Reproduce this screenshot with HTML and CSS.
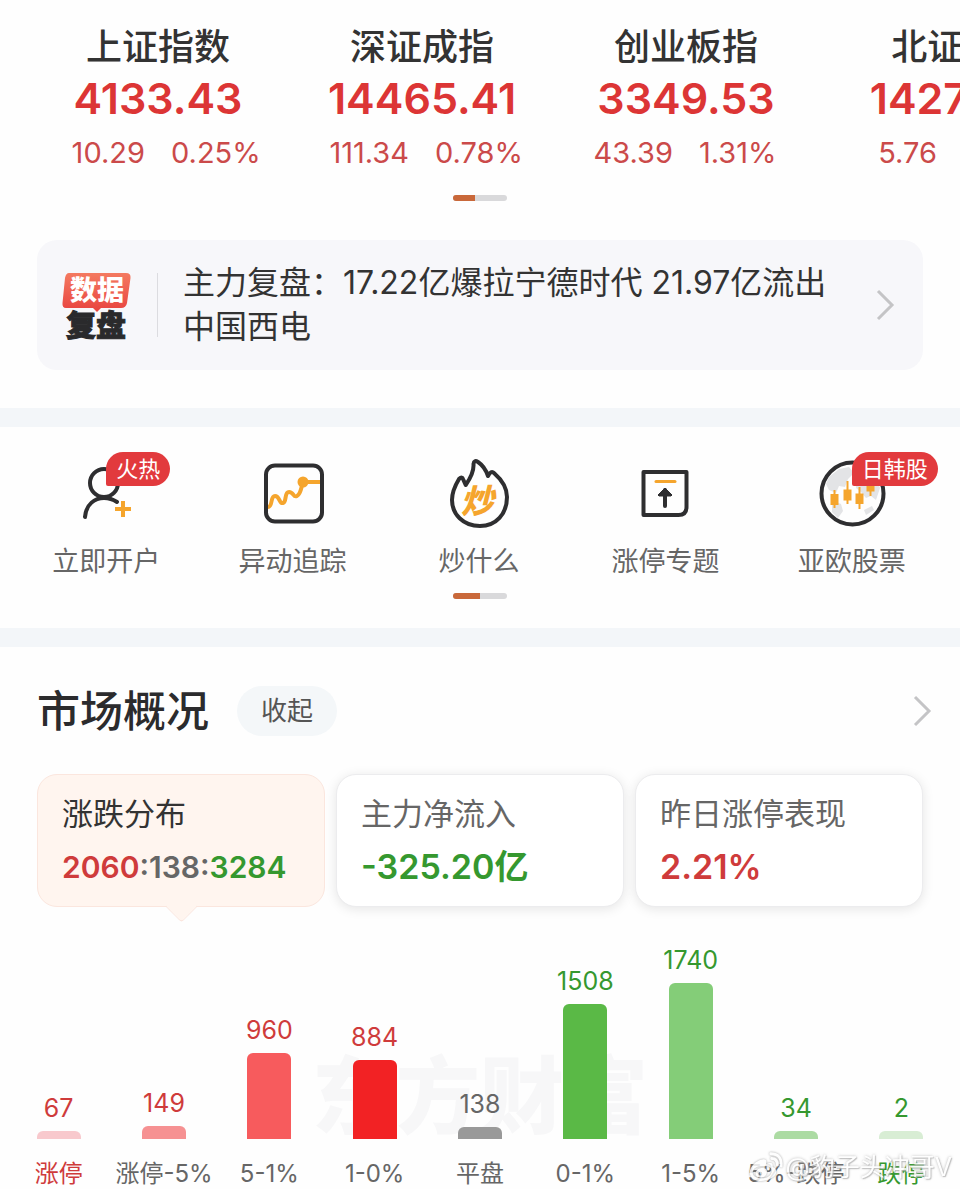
FILE: index.html
```html
<!DOCTYPE html>
<html lang="zh-CN">
<head>
    <meta charset="UTF-8">
    <meta name="viewport" content="width=device-width, initial-scale=1.0">
    <title>市场概况</title>
    <link rel="stylesheet" href="styles.css">
</head>
<body>
    <section class="indices">
        <div class="index-list">
            <a class="index" href="#sh">
                <span class="index-name">上证指数</span>
                <span class="index-value">4133.43</span>
                <span class="index-change"><span>10.29</span><span>0.25%</span></span>
            </a>
            <a class="index" href="#sz">
                <span class="index-name">深证成指</span>
                <span class="index-value">14465.41</span>
                <span class="index-change"><span>111.34</span><span>0.78%</span></span>
            </a>
            <a class="index" href="#cyb">
                <span class="index-name">创业板指</span>
                <span class="index-value">3349.53</span>
                <span class="index-change"><span>43.39</span><span>1.31%</span></span>
            </a>
            <a class="index" href="#bz">
                <span class="index-name">北证50</span>
                <span class="index-value">1427.39</span>
                <span class="index-change"><span>5.76</span></span>
            </a>
        </div>
        <div class="pager"><span class="pager-on"></span></div>
        <a class="news" href="#review">
            <svg class="news-logo" width="72" height="70" viewBox="0 0 72 70">
                <defs>
                    <linearGradient id="badge" x1="0" y1="0" x2="0" y2="1">
                        <stop offset="0" stop-color="#f47a60"/>
                        <stop offset="1" stop-color="#e8433f"/>
                    </linearGradient>
                </defs>
                <path d="M8 3H65Q70 3 69.500 8L66 33Q65 38 60 38H40L36 42L32 38H5Q1 38 1.500 33L4 8Q5 3 8 3Z" fill="url(#badge)"/>
                <text class="logo-top" x="36" y="30" text-anchor="middle">数据</text>
                <text class="logo-bottom" x="35" y="66" text-anchor="middle">复盘</text>
            </svg>
            <span class="news-text">主力复盘：17.22亿爆拉宁德时代 21.97亿流出中国西电</span>
            <svg class="chevron" width="20" height="32" viewBox="0 0 20 32"><path d="M3 2L17 16L3 30"/></svg>
        </a>
    </section>

    <nav class="shortcuts">
        <div class="shortcut-list">
            <a class="shortcut" href="#open">
                <svg width="80" height="80" viewBox="0 0 80 80">
                    <g fill="none" stroke="#2e2e30" stroke-width="4" stroke-linecap="round">
                        <circle cx="38" cy="33" r="14"/>
                        <path d="M19 67C20 54 29 48 38 48C44 48 48 50 51 52"/>
                    </g>
                    <path d="M49 59H65M57 51V67" stroke="#f5a52d" stroke-width="4"/>
                </svg>
                <span class="tag">火热</span>
                <span class="shortcut-name">立即开户</span>
            </a>
            <a class="shortcut" href="#track">
                <svg width="80" height="80" viewBox="0 0 80 80">
                    <path d="M15 57C20 57 17 46 22 46S26 54 30 53S31 42 36 42S40 48 44 46S48 38 50 32H68" fill="none" stroke="#f5a52d" stroke-width="4"/>
                    <circle cx="50" cy="32" r="5.500" fill="#f5a52d"/>
                    <rect x="13" y="15.500" width="56" height="56" rx="9" fill="none" stroke="#2e2e30" stroke-width="4"/>
                </svg>
                <span class="shortcut-name">异动追踪</span>
            </a>
            <a class="shortcut" href="#hot">
                <svg width="80" height="80" viewBox="0 0 80 80">
                    <path d="M26.700 35C31 29 35 21 34.500 14Q35 9.500 39 12C45 16 47 20 49 26Q52 20 55 23C63 30 68 39 68 47C68 64 57 76 41 76C24 76 13 64 13 50C13 41 17 34 20 29Q23 26 24 29Z" fill="none" stroke="#2e2e30" stroke-width="4" stroke-linejoin="round"/>
                    <text class="flame-text" x="38" y="63" text-anchor="middle">炒</text>
                </svg>
                <span class="shortcut-name">炒什么</span>
            </a>
            <a class="shortcut" href="#limit">
                <svg width="80" height="80" viewBox="0 0 80 80">
                    <path d="M18.500 22H61.500V57Q61.500 65 53.500 65H18.500Z" fill="none" stroke="#2e2e30" stroke-width="4" stroke-linejoin="round"/>
                    <path d="M31 31.500H50" stroke="#f5a52d" stroke-width="3" stroke-linecap="round"/>
                    <path d="M40 40V56" stroke="#2e2e30" stroke-width="4" stroke-linecap="round"/>
                    <path d="M40 38L47 45L46 46H34L33 45Z" fill="#2e2e30" stroke="#2e2e30" stroke-linejoin="round"/>
                </svg>
                <span class="shortcut-name">涨停专题</span>
            </a>
            <a class="shortcut" href="#global">
                <svg width="80" height="80" viewBox="0 0 80 80">
                    <path d="M17 27L27 19L37 17L42 23L36 29L33 37L27 36L24 43L17 40L14 34ZM20 50L29 54L31 61L26 68L20 62ZM43 27L52 20L62 25L68 38L64 50L59 46L54 48L49 42L44 38ZM52 60L60 56L62 60L54 65Z" fill="#e3e4e6"/>
                    <g fill="#f5a52d" stroke="#f5a52d">
                        <path d="M22.500 40V58M35.500 31V54M47.500 37V59M58.500 28V46" stroke-width="2"/>
                        <path d="M18.500 44H26.500V55H18.500ZM31.500 39.500H39.500V50.500H31.500ZM43.500 43.500H51.500V54H43.500ZM54.500 31H62.500V41.500H54.500Z" stroke="none"/>
                    </g>
                    <circle cx="40.500" cy="43.500" r="31" fill="none" stroke="#2e2e30" stroke-width="4"/>
                </svg>
                <span class="tag">日韩股</span>
                <span class="shortcut-name">亚欧股票</span>
            </a>
        </div>
        <div class="pager"><span class="pager-on half"></span></div>
    </nav>

    <section class="market">
        <header class="market-head">
            <h2>市场概况</h2>
            <button class="fold" type="button">收起</button>
            <a class="more" href="#market" aria-label="市场概况">
                <svg class="chevron" width="20" height="32" viewBox="0 0 20 32"><path d="M3 2L17 16L3 30"/></svg>
            </a>
        </header>
        <div class="cards">
            <button class="card active" type="button">
                <span class="card-name">涨跌分布</span>
                <span class="card-ratio"><span class="red">2060</span>:138:<span class="green">3284</span></span>
            </button>
            <button class="card" type="button">
                <span class="card-name">主力净流入</span>
                <span class="card-value green">-325.20亿</span>
            </button>
            <button class="card" type="button">
                <span class="card-name">昨日涨停表现</span>
                <span class="card-value red">2.21%</span>
            </button>
        </div>
        <div class="chart">
            <span class="chart-mark">东方财富</span>
            <div class="col red"><span class="num">67</span><span class="bar up-1" style="height: 8px"></span><span class="range">涨停</span></div>
            <div class="col red"><span class="num">149</span><span class="bar up-2" style="height: 13px"></span><span class="range gray">涨停-5%</span></div>
            <div class="col red"><span class="num">960</span><span class="bar up-3" style="height: 86px"></span><span class="range gray">5-1%</span></div>
            <div class="col red"><span class="num">884</span><span class="bar up-4" style="height: 79px"></span><span class="range gray">1-0%</span></div>
            <div class="col gray"><span class="num">138</span><span class="bar flat" style="height: 12px"></span><span class="range">平盘</span></div>
            <div class="col green"><span class="num">1508</span><span class="bar down-4" style="height: 135px"></span><span class="range gray">0-1%</span></div>
            <div class="col green"><span class="num">1740</span><span class="bar down-3" style="height: 156px"></span><span class="range gray">1-5%</span></div>
            <div class="col green"><span class="num">34</span><span class="bar down-2" style="height: 8px"></span><span class="range gray">5%-跌停</span></div>
            <div class="col green"><span class="num">2</span><span class="bar down-1" style="height: 8px"></span><span class="range">跌停</span></div>
        </div>
        <div class="author">
            <svg width="36" height="34" viewBox="0 0 38 34">
                <path d="M15 9C8 10 1 18 2 24C3 31 12 33 19 31C27 29 32 24 29 19C28 17 26 18 26 16C27 12 23 12 19 14C20 10 19 8 15 9ZM15 16C9 16 5 19 5 23S10 29 15 29S25 26 25 21S20 16 15 16Z" fill="#fff" fill-rule="evenodd"/>
                <path d="M14 18C11 18 8 21 8 24S11 28 14 28S20 26 20 22S17 18 14 18ZM13 22A2 2 0 1 1 13 26A2 2 0 1 1 13 22Z" fill="#fff" fill-rule="evenodd"/>
                <path d="M25 8Q31 8 31 15M24 3Q36 3 35 16" fill="none" stroke="#fff" stroke-width="3" stroke-linecap="round"/>
            </svg>
            <span>@豹子头冲哥V</span>
        </div>
    </section>
</body>
</html>
```
FILE: styles.css
```css
* {
    box-sizing: border-box;
}
body {
    margin: 0;
    font-family: Inter, "Noto Sans CJK SC", sans-serif;
    color: #333;
    background-color: #fefefe;
    overflow-x: hidden;
}
a {
    color: inherit;
    text-decoration: none;
}
button {
    font-family: inherit;
    border: none;
    cursor: pointer;
}
.red {
    color: #cf3b3b;
}
.green {
    color: #35982f;
}
.gray {
    color: #666;
}
.chevron {
    flex: none;
    fill: none;
    stroke: #c4c4c6;
    stroke-width: 3;
}
.pager {
    width: 54px;
    height: 6px;
    margin: 0 auto;
    border-radius: 3px;
    background-color: #d9d9db;
    overflow: hidden;
}
.pager-on {
    display: block;
    width: 22px;
    height: 6px;
    background-color: #c9683a;
}
.pager-on.half {
    width: 27px;
}

/* indices */
.indices {
    padding: 24px 0 38px;
}
.index-list {
    display: flex;
    padding-left: 26px;
    margin-bottom: 20px;
    overflow: hidden;
}
.index {
    flex: 0 0 264px;
    display: flex;
    flex-direction: column;
    align-items: center;
    white-space: nowrap;
}
.index-name {
    font-size: 36px;
    line-height: 46px;
    font-weight: 500;
}
.index-value {
    font-size: 43px;
    line-height: 56px;
    font-weight: 600;
    color: #dc3535;
}
.index-change {
    display: grid;
    grid-template-columns: 1fr 1fr;
    gap: 26px;
    width: 100%;
    margin-top: 5px;
    font-size: 29px;
    line-height: 44px;
    color: #cb4a4a;
}
.index-change span:first-child {
    text-align: right;
}
.news {
    display: flex;
    align-items: center;
    margin: 39px 37px 0;
    padding: 21px 28px 21px 24px;
    border-radius: 20px;
    background-color: #f7f7fa;
}
.news-logo {
    flex: none;
}
.news-text {
    flex: 1;
    margin-left: 24px;
    padding: 0 32px 0 26px;
    font-size: 32px;
    line-height: 44px;
    background: linear-gradient(#dcdce0, #dcdce0) left center / 1px 64px no-repeat;
}
.logo-top {
    font-size: 27px;
    font-weight: 900;
    fill: #fff;
}
.logo-bottom {
    font-size: 30px;
    font-weight: 900;
    fill: #2a2a2c;
    stroke: #2a2a2c;
}

/* shortcuts */
.shortcuts {
    padding: 23px 0 29px;
    border-top: 19px solid #f3f6f9;
    border-bottom: 19px solid #f3f6f9;
}
.shortcut-list {
    display: grid;
    grid-template-columns: repeat(5, 1fr);
    padding: 0 15px 0 13px;
    margin-bottom: 11px;
}
.shortcut {
    position: relative;
    display: flex;
    flex-direction: column;
    align-items: center;
}
.shortcut-name {
    margin-top: 12px;
    font-size: 27px;
    line-height: 40px;
    color: #666;
}
.tag {
    position: absolute;
    top: 2px;
    left: 50%;
    padding: 0 10px;
    border-radius: 17px 17px 17px 2px;
    font-size: 22px;
    line-height: 34px;
    color: #fff;
    background-color: #e23a3d;
}
.flame-text {
    font-size: 33px;
    font-weight: 900;
    font-style: italic;
    fill: #f5a52d;
}

/* market */
.market {
    position: relative;
    padding: 38px 0 0;
}
.market-head {
    display: flex;
    align-items: center;
    padding: 0 28px 0 37px;
    margin-bottom: 37px;
}
h2 {
    margin: 0;
    font-size: 43px;
    line-height: 52px;
    font-weight: 500;
    color: #2b2b2d;
}
.fold {
    margin-left: 28px;
    padding: 0 24px;
    border-radius: 25px;
    font-size: 26px;
    line-height: 50px;
    color: #555;
    background-color: #f4f7f9;
}
.more {
    margin-left: auto;
    line-height: 0;
}
.cards {
    display: grid;
    grid-template-columns: repeat(3, 1fr);
    gap: 11px;
    padding: 0 37px;
}
.card {
    position: relative;
    display: flex;
    flex-direction: column;
    gap: 9px;
    padding: 17px 24px;
    border: 1px solid #ececee;
    border-radius: 20px;
    text-align: left;
    background-color: #fff;
    box-shadow: 0 2px 12px rgba(0, 0, 0, 0.1);
}
.card-name {
    font-size: 31px;
    line-height: 44px;
    color: #666;
}
.card-value {
    font-size: 34px;
    line-height: 44px;
    font-weight: 600;
}
.card-ratio {
    font-size: 30px;
    line-height: 44px;
    font-weight: 600;
    color: #666;
}
.card.active {
    border-color: #fbe6de;
    background-color: #fff5ef;
    box-shadow: none;
}
.card.active .card-name {
    color: #333;
}
.card.active::after {
    content: "";
    position: absolute;
    bottom: -12px;
    left: 50%;
    width: 22px;
    height: 22px;
    margin-left: -11px;
    border-right: 1px solid #fbe6de;
    border-bottom: 1px solid #fbe6de;
    border-bottom-right-radius: 4px;
    background: linear-gradient(135deg, transparent 50%, #fff5ef 50%);
    transform: rotate(45deg);
}

/* chart */
.chart {
    position: relative;
    display: grid;
    grid-template-columns: repeat(9, 1fr);
    align-items: end;
    padding: 41px 6px 0;
}
.chart-mark {
    position: absolute;
    right: 0;
    bottom: 38px;
    left: 0;
    font-size: 84px;
    line-height: 110px;
    font-weight: 900;
    text-align: center;
    color: #f7f7f8;
}
.col {
    position: relative;
    display: flex;
    flex-direction: column;
    align-items: center;
    white-space: nowrap;
}
.num {
    margin-bottom: 10px;
    font-size: 25px;
    line-height: 25px;
}
.bar {
    width: 44px;
    border-radius: 6px 6px 0 0;
}
.range {
    margin-top: 19px;
    font-size: 24px;
    line-height: 32px;
}
.up-1 {
    background-color: #f8c9cd;
}
.up-2 {
    background-color: #f69192;
}
.up-3 {
    background-color: #f75b5d;
}
.up-4 {
    background-color: #f22224;
}
.flat {
    background-color: #999;
}
.down-4 {
    background-color: #5ab946;
}
.down-3 {
    background-color: #84cd78;
}
.down-2 {
    background-color: #acdba3;
}
.down-1 {
    background-color: #d8edd4;
}
.author {
    position: absolute;
    right: 8px;
    bottom: 5px;
    display: flex;
    align-items: center;
    gap: 2px;
    font-size: 25px;
    line-height: 36px;
    color: #fff;
    text-shadow: 0 0 3px #aaa, 1px 1px 1px #bbb;
    opacity: 0.85;
}
.author svg {
    filter: drop-shadow(0 0 1px #999);
}
```
